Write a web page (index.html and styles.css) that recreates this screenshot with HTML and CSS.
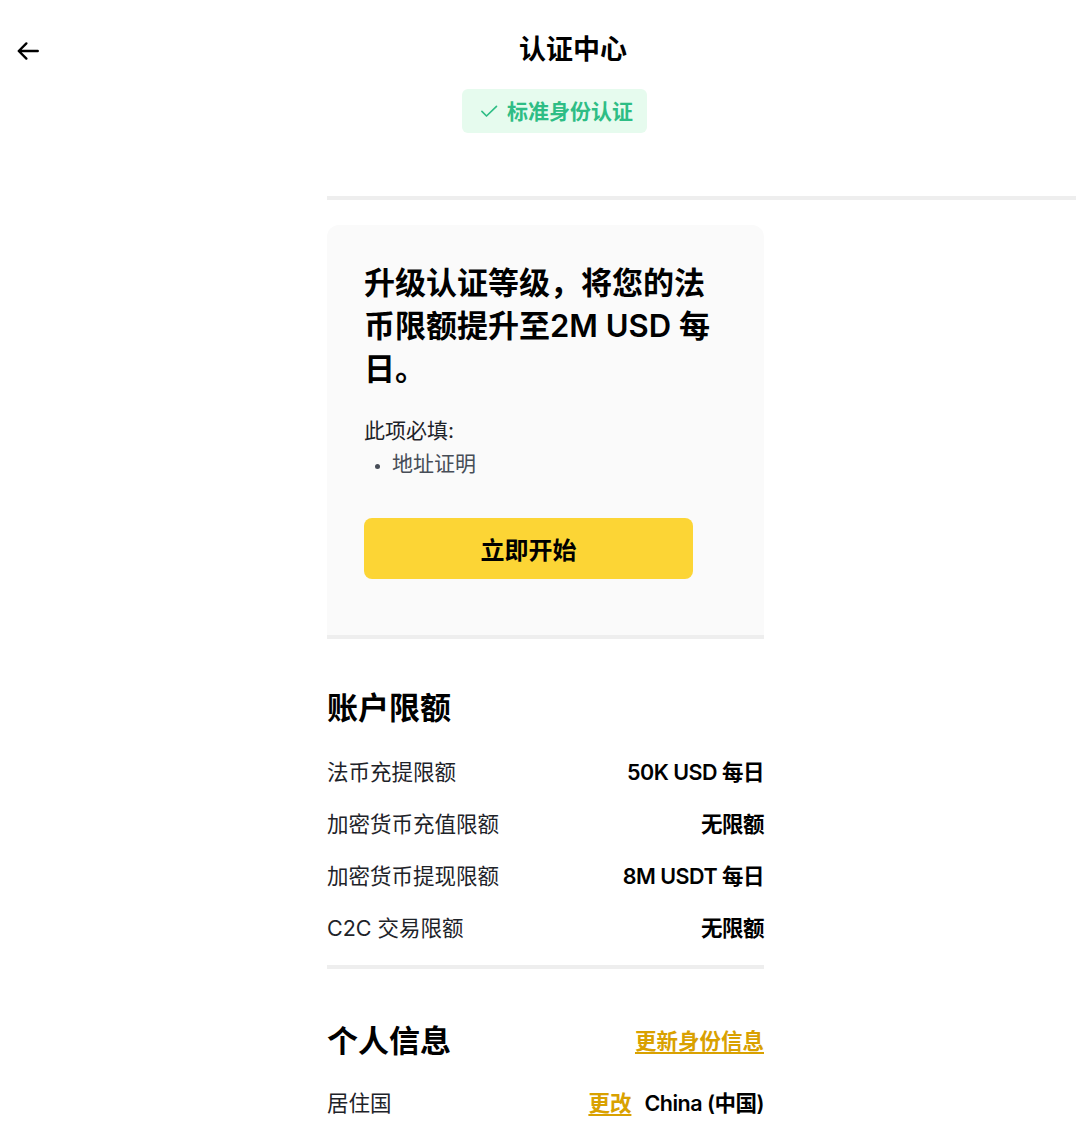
FILE: index.html
```html
<!DOCTYPE html>
<html lang="zh-CN">
<head>
<meta charset="utf-8">
<title>认证中心</title>
<link rel="stylesheet" href="styles.css">
</head>
<body>
<header class="topbar">
  <a class="back" href="#" aria-label="返回">
    <svg width="26" height="26" viewBox="0 0 24 24" fill="none" stroke="#000" stroke-width="2.2" stroke-linecap="round" stroke-linejoin="round"><path d="M21 12H3.5M10.5 5l-7 7 7 7"/></svg>
  </a>
  <h1 class="title">认证中心</h1>
</header>
<div class="badge-row">
  <div class="badge">
    <svg width="20" height="20" viewBox="0 0 24 24" fill="none" stroke="#2ebd85" stroke-width="2" stroke-linecap="round" stroke-linejoin="round"><path d="M3.5 12.5l5.5 5.5L21 6.5"/></svg>
    <span>标准身份认证</span>
  </div>
</div>
<div class="wide-divider"></div>
<main class="column">
  <section class="card">
    <h2 class="card-title">升级认证等级，将您的法币限额提升至2M USD 每日。</h2>
    <p class="req">此项必填:</p>
    <ul class="req-list"><li>地址证明</li></ul>
    <button class="primary">立即开始</button>
  </section>
  <div class="divider"></div>
  <section class="section">
    <h3 class="section-title">账户限额</h3>
    <div class="row"><span class="label">法币充提限额</span><span class="value">50K USD 每日</span></div>
    <div class="row"><span class="label">加密货币充值限额</span><span class="value">无限额</span></div>
    <div class="row"><span class="label">加密货币提现限额</span><span class="value">8M USDT 每日</span></div>
    <div class="row"><span class="label">C2C 交易限额</span><span class="value">无限额</span></div>
  </section>
  <div class="divider"></div>
  <section class="section section-info">
    <div class="section-head">
      <h3 class="section-title">个人信息</h3>
      <a class="link" href="#">更新身份信息</a>
    </div>
    <div class="row"><span class="label">居住国</span><span class="value-group"><a class="link" href="#">更改</a><span class="value">China (中国)</span></span></div>
  </section>
</main>
</body>
</html>
```

FILE: styles.css
```css
* { box-sizing: border-box; }
html, body { margin: 0; padding: 0; background: #fff; }
body {
  font-family: "Inter", "Noto Sans CJK SC", sans-serif;
  color: #1e2329;
  width: 1076px;
}
.topbar {
  position: relative;
  height: 76px;
  padding-top: 24px;
}
.back {
  position: absolute;
  left: 15px;
  top: 38px;
  display: block;
  line-height: 0;
}
.title {
  margin: 0;
  padding-left: 70px;
  text-align: center;
  font-size: 27px;
  line-height: 52px;
  font-weight: 600;
  color: #000;
}
.badge-row {
  display: flex;
  padding-left: 462px;
  margin-top: 13px;
}
.badge {
  display: flex;
  align-items: center;
  gap: 8px;
  height: 44px;
  padding: 0 14px 2px 17px;
  background: #e6fbee;
  border-radius: 6px;
  color: #2ebd85;
  font-size: 21px;
  font-weight: 600;
}
.badge svg { margin-top: 2px; }
.wide-divider {
  margin: 63px 0 0 327px;
  height: 4px;
  background: #eeeeee;
}
.column {
  margin-left: 327px;
  width: 437px;
  padding-top: 25px;
}
.card {
  background: #fafafa;
  border-radius: 12px 12px 0 0;
  padding: 36px 37px 56px;
}
.card-title {
  margin: 0;
  width: 356px;
  font-size: 31px;
  line-height: 43px;
  font-weight: 600;
  color: #000;
}
.req {
  margin: 25px 0 0;
  font-size: 21px;
  line-height: 32px;
  color: #1e2329;
}
.req-list {
  margin: 0;
  padding: 0 0 0 28px;
  font-size: 21px;
  line-height: 34px;
  color: #474d57;
}
.req-list li::marker { font-size: 16px; }
.primary {
  display: block;
  margin-top: 37px;
  width: 329px;
  height: 61px;
  border: 0;
  border-radius: 8px;
  background: #fcd535;
  color: #000;
  font-family: inherit;
  font-size: 24px;
  font-weight: 600;
}
.divider {
  height: 4px;
  background: #eeeeee;
}
.section { padding-top: 47px; padding-bottom: 13px; }
.section-title {
  margin: 0 0 18px;
  padding-top: 4px;
  font-size: 31px;
  line-height: 36px;
  font-weight: 600;
  color: #000;
}
.row {
  display: flex;
  justify-content: space-between;
  align-items: center;
  height: 52px;
  font-size: 21.5px;
}
.label { color: #1e2329; }
.value { font-weight: 600; color: #000; letter-spacing: -0.5px; }
.section-info { padding-top: 50px; }
.section-head {
  display: flex;
  justify-content: space-between;
  align-items: center;
  margin-bottom: 16px;
}
.section-head .section-title { margin: 0; }
.link {
  color: #d9a100;
  font-weight: 600;
  font-size: 21.5px;
  text-decoration: underline;
  text-underline-offset: 3px;
}
.value-group { display: flex; align-items: center; gap: 13px; }
```
